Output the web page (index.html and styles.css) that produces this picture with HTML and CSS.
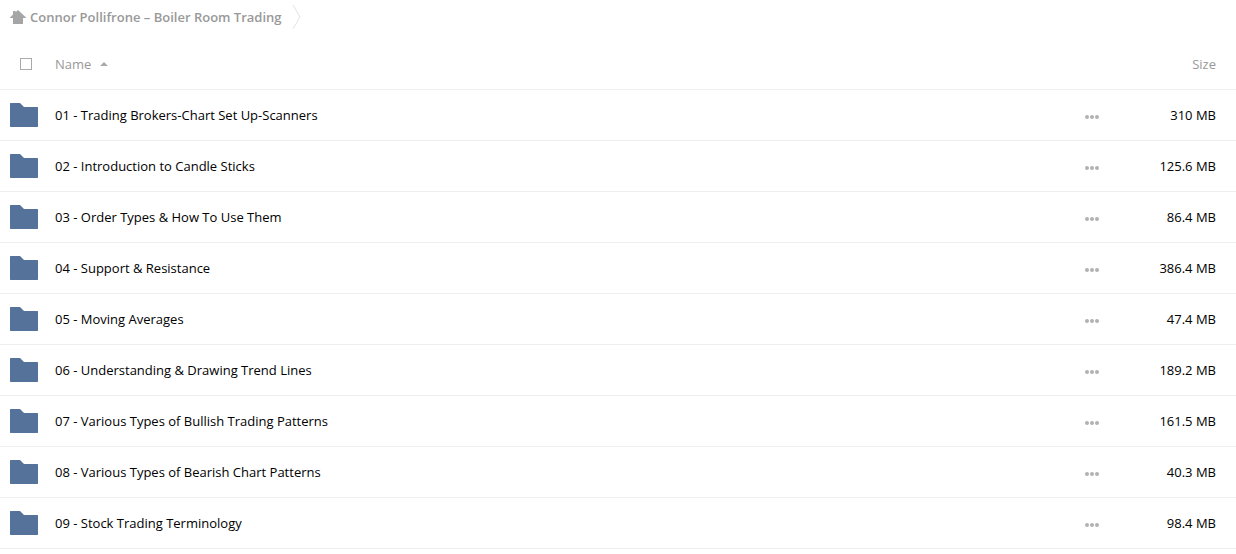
FILE: index.html
```
<!DOCTYPE html>
<html lang="en">
<head>
    <meta charset="UTF-8">
    <title>Connor Pollifrone – Boiler Room Trading</title>
    <link rel="stylesheet" href="styles.css">
</head>
<body>
    <!-- icons shared by all rows -->
    <svg class="icon-defs" aria-hidden="true">
        <symbol id="folder" viewBox="0 0 28 24"><path d="M0.500 0H10L14 4H27.500L28 4.500V23.500L27.500 24H0.500L0 23.500V0.500Z"/></symbol>
        <symbol id="more" viewBox="0 0 14 4"><circle cx="2" cy="2" r="2"/><circle cx="7" cy="2" r="2"/><circle cx="12" cy="2" r="2"/></symbol>
    </svg>
    <nav class="breadcrumb">
        <a href="#" class="crumb">
            <svg class="home" viewBox="0 0 16 14"><path d="M8 0L5.500 2.200V1H3V4.400L0 7.500V8H3V14H13V8H16V7.500Z"/></svg>
            <span>Connor Pollifrone – Boiler Room Trading</span>
        </a>
        <svg class="separator" viewBox="0 0 9 24"><path d="M1 0L8 12L1 24"/></svg>
    </nav>
    <table id="filestable">
        <thead>
            <tr>
                <th class="selection"><input type="checkbox" id="select_all" aria-label="Select all"></th>
                <th class="name"><button class="sort">Name <span class="sort-arrow"></span></button></th>
                <th class="action"></th>
                <th class="size"><button class="sort">Size</button></th>
            </tr>
        </thead>
        <tbody id="fileList"></tbody>
    </table>
    <script src="files.js"></script>
</body>
</html>
```
FILE: styles.css
```
* {
    box-sizing: border-box;
}
body {
    margin: 0;
    background: #fff;
    color: #000;
    font: 13px/20px "Open Sans", sans-serif;
}
a {
    color: inherit;
    text-decoration: none;
}
button {
    padding: 0;
    border: 0;
    background: none;
    color: inherit;
    font: inherit;
    cursor: pointer;
}
.icon-defs {
    display: none;
}

/* breadcrumb */
.breadcrumb {
    display: flex;
    align-items: center;
    height: 34px;
    padding-left: 10px;
    gap: 10px;
}
.crumb {
    display: flex;
    align-items: center;
    gap: 4px;
    color: #999;
    font-weight: 600;
}
.home {
    width: 16px;
    height: 14px;
    fill: #a5a5a5;
}
.separator {
    width: 9px;
    height: 24px;
    fill: none;
    stroke: #e2e2e2;
}

/* file list */
#filestable {
    width: 100%;
    margin-top: 5px;
    border-collapse: separate;
    border-spacing: 0;
    table-layout: fixed;
}
#filestable th,
#filestable td {
    height: 51px;
    padding: 0;
    border-bottom: 1px solid #eee;
    text-align: left;
    vertical-align: middle;
}
#filestable th {
    color: #999;
    font-weight: 400;
}
#filestable .selection {
    width: 55px;
    padding-left: 10px;
}
#filestable .action {
    width: 56px;
}
#filestable .size {
    width: 95px;
    padding-right: 20px;
    text-align: right;
}
#select_all {
    display: block;
    appearance: none;
    width: 12px;
    height: 12px;
    margin: 0 0 0 10px;
    border: 1px solid #aaa;
    background: #fff;
}
#select_all:checked {
    background: #999;
}
.sort {
    display: inline-flex;
    align-items: center;
    gap: 9px;
}
.sort-arrow {
    border: 4px solid transparent;
    border-top: 0;
    border-bottom-color: #aaa;
}
.folder {
    display: block;
    width: 28px;
    height: 24px;
    fill: #54729a;
}
.more {
    display: block;
}
.more svg {
    display: block;
    width: 14px;
    height: 4px;
    margin-top: 4px;
    fill: #b2b2b2;
}
```
FILE: files.js
```
var files = [
    ["01 - Trading Brokers-Chart Set Up-Scanners", "310 MB"],
    ["02 - Introduction to Candle Sticks", "125.6 MB"],
    ["03 - Order Types & How To Use Them", "86.4 MB"],
    ["04 - Support & Resistance", "386.4 MB"],
    ["05 - Moving Averages", "47.4 MB"],
    ["06 - Understanding & Drawing Trend Lines", "189.2 MB"],
    ["07 - Various Types of Bullish Trading Patterns", "161.5 MB"],
    ["08 - Various Types of Bearish Chart Patterns", "40.3 MB"],
    ["09 - Stock Trading Terminology", "98.4 MB"]
];

// add one table row per folder
var list = document.getElementById("fileList");
files.forEach(function (file) {
    var row = list.insertRow();
    row.innerHTML =
        '<td class="selection"><svg class="folder"><use href="#folder"/></svg></td>' +
        '<td class="name"><a href="#"></a></td>' +
        '<td class="action"><button class="more" aria-label="More actions"><svg><use href="#more"/></svg></button></td>' +
        '<td class="size"></td>';
    row.querySelector(".name a").textContent = file[0];
    row.querySelector(".size").textContent = file[1];
});
```
